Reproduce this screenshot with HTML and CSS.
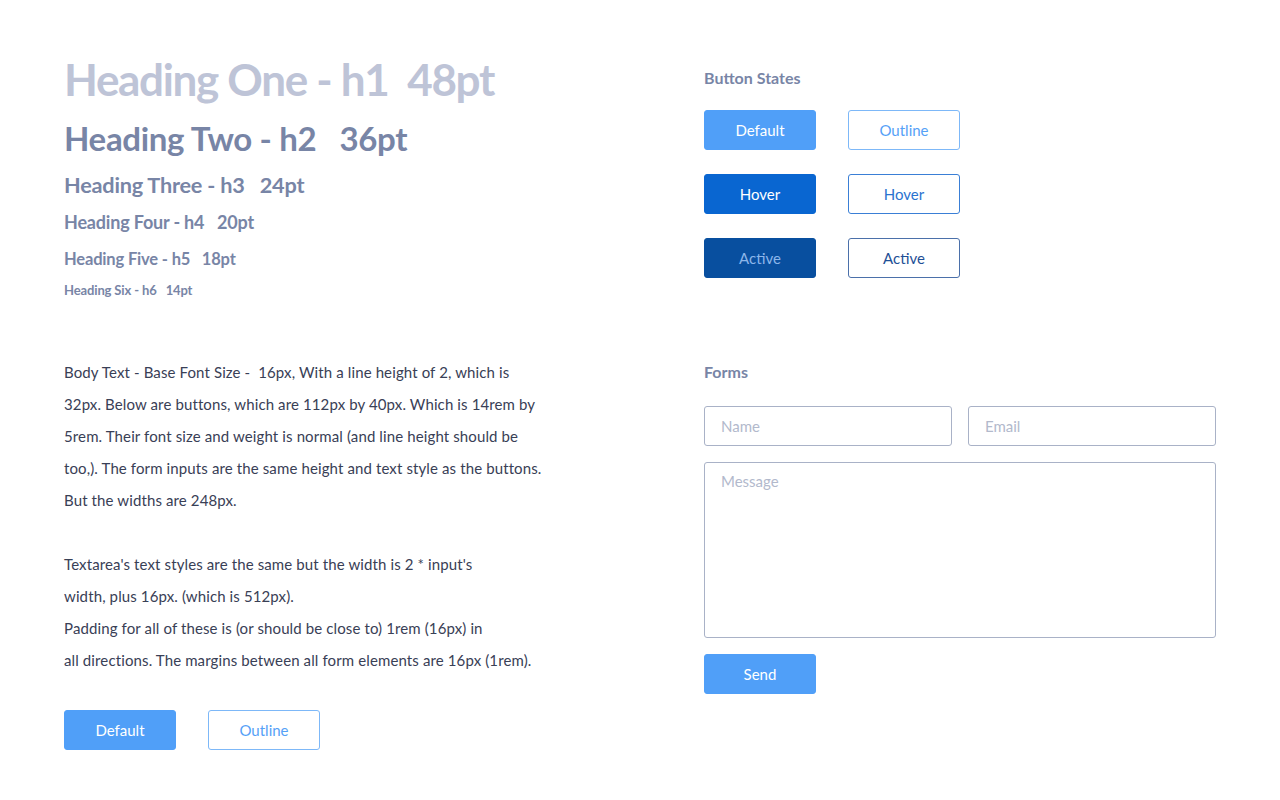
FILE: index.html
```html
<!DOCTYPE html>
<html lang="en">
<head>
<meta charset="utf-8">
<title>Style Guide</title>
<link rel="stylesheet" href="styles.css">
</head>
<body>
<main class="page">
  <section class="headings">
    <h1 class="h1">Heading One - h1  48pt</h1>
    <h2 class="h2">Heading Two - h2   36pt</h2>
    <h3 class="h3">Heading Three - h3   24pt</h3>
    <h4 class="h4">Heading Four - h4   20pt</h4>
    <h5 class="h5">Heading Five - h5   18pt</h5>
    <h6 class="h6">Heading Six - h6   14pt</h6>
  </section>

  <section class="states">
    <h3 class="label">Button States</h3>
    <div class="btn-grid">
      <button class="btn btn-default">Default</button>
      <button class="btn btn-outline">Outline</button>
      <button class="btn btn-hover">Hover</button>
      <button class="btn btn-outline-hover">Hover</button>
      <button class="btn btn-active">Active</button>
      <button class="btn btn-outline-active">Active</button>
    </div>
  </section>

  <section class="body-copy">
    <p class="para">Body Text - Base Font Size - &nbsp;16px, With a line height of 2, which is<br>32px. Below are buttons, which are 112px by 40px. Which is 14rem by<br>5rem. Their font size and weight is normal (and line height should be<br>too,). The form inputs are the same height and text style as the buttons.<br>But the widths are 248px.</p>
    <p class="para">Textarea's text styles are the same but the width is 2 * input's<br>width, plus 16px. (which is 512px).<br>Padding for all of these is (or should be close to) 1rem (16px) in<br>all directions. The margins between all form elements are 16px (1rem).</p>
    <div class="btn-row">
      <button class="btn btn-default">Default</button>
      <button class="btn btn-outline">Outline</button>
    </div>
  </section>

  <section class="forms">
    <h3 class="label">Forms</h3>
    <form class="form">
      <div class="form-row">
        <input class="field" type="text" placeholder="Name">
        <input class="field" type="email" placeholder="Email">
      </div>
      <textarea class="field area" placeholder="Message"></textarea>
      <button type="button" class="btn btn-default">Send</button>
    </form>
  </section>
</main>
</body>
</html>
```

FILE: styles.css
```css
* { box-sizing: border-box; }

html, body {
  margin: 0;
  padding: 0;
  background: #ffffff;
}

body {
  font-family: "Lato", "Open Sans", sans-serif;
  font-size: 16px;
  color: #394056;
}

.page {
  display: grid;
  grid-template-columns: 640px 512px;
  grid-template-rows: 356px auto;
  padding: 0 64px;
}

/* Headings */
.headings {
  padding-top: 54px;
}

.headings h1, .headings h2, .headings h3,
.headings h4, .headings h5, .headings h6 {
  margin: 0;
  white-space: pre;
  color: #7885a6;
  font-weight: 700;
  letter-spacing: -0.01em;
}

.headings .h1 {
  font-size: 44px;
  line-height: 50px;
  color: #bec4d7;
  letter-spacing: -0.03em;
}
.headings .h2 { font-size: 33px; line-height: 40px; margin-top: 14px; }
.headings .h3 { font-size: 21.7px; line-height: 30px; margin-top: 12px; }
.headings .h4 { font-size: 18px; line-height: 26px; margin-top: 9px; }
.headings .h5 { font-size: 16.5px; line-height: 24px; margin-top: 12px; }
.headings .h6 { font-size: 13px; line-height: 18px; margin-top: 10px; }

/* Section labels */
.label {
  margin: 0;
  font-size: 16px;
  line-height: 32px;
  font-weight: 700;
  color: #7885a6;
}

.states {
  padding-top: 62px;
}

.btn-grid {
  display: grid;
  grid-template-columns: 112px 112px;
  column-gap: 32px;
  row-gap: 24px;
  margin-top: 16px;
}

/* Buttons */
.btn {
  width: 112px;
  height: 40px;
  padding: 0;
  border-radius: 3px;
  border: 1px solid transparent;
  font-family: inherit;
  font-size: 15px;
  font-weight: 400;
  line-height: 1;
  cursor: pointer;
}

.btn-default { background: #509ff8; color: #ffffff; border-color: #509ff8; }
.btn-hover { background: #0966d1; color: #ffffff; border-color: #0966d1; }
.btn-active { background: #084f9f; color: #8cb6ea; border-color: #084f9f; }
.btn-outline { background: #ffffff; color: #55a1f7; border-color: #7db8f8; }
.btn-outline-hover { background: #ffffff; color: #2a73cf; border-color: #3a7fd6; }
.btn-outline-active { background: #ffffff; color: #1e4f96; border-color: #4b70aa; }

/* Body copy */
.para {
  margin: 0 0 32px;
  font-size: 15px;
  line-height: 32px;
  letter-spacing: 0.008em;
  white-space: nowrap;
}

.para + .para {
  margin-bottom: 34px;
}

.btn-row {
  display: flex;
  gap: 32px;
}

/* Forms */
.form {
  display: flex;
  flex-direction: column;
  align-items: flex-start;
  gap: 16px;
  margin-top: 18px;
}

.form-row {
  display: flex;
  gap: 16px;
}

.field {
  width: 248px;
  height: 40px;
  padding: 0 16px;
  border: 1px solid #a9b2c7;
  border-radius: 3px;
  font-family: inherit;
  font-size: 15px;
  color: #394056;
  background: #ffffff;
  outline: none;
}

.area {
  width: 512px;
  height: 176px;
  padding: 9px 16px;
  line-height: 18px;
  resize: none;
}

.field::placeholder {
  color: #b2b9cc;
  opacity: 1;
}
```
